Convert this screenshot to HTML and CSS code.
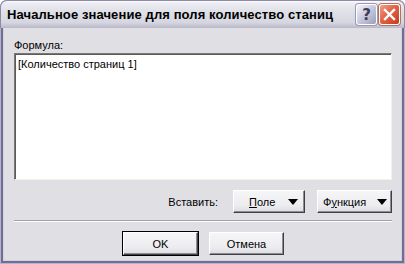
FILE: index.html
```html
<!DOCTYPE html>
<html lang="ru">
<head>
    <meta charset="UTF-8">
    <title>Начальное значение для поля количество станиц</title>
    <link rel="stylesheet" href="styles.css">
</head>
<body>
    <div class="window">
        <div class="titlebar">
            <span class="title">Начальное значение для поля количество станиц</span>
            <div class="caption-btns">
                <span class="cap-btn help">?</span>
                <span class="cap-btn close">
                    <svg width="13" height="13" viewBox="0 0 13 13">
                        <path d="M2 2 L11 11 M11 2 L2 11" stroke="#fff" stroke-width="2.4" stroke-linecap="square"/>
                    </svg>
                </span>
            </div>
        </div>

        <div class="client">
            <label class="field-label" for="formula">Формула:</label>
            <div class="formula" id="formula">[Количество страниц 1]</div>

            <div class="insert-row">
                <span class="insert-label">Вставить:</span>
                <button class="btn btn-drop field-btn"><span><u>П</u>оле</span><i class="arrow"></i></button>
                <button class="btn btn-drop func-btn"><span>Ф<u>у</u>нкция</span><i class="arrow"></i></button>
            </div>

            <div class="separator"></div>

            <div class="actions">
                <button class="btn default">OK</button>
                <button class="btn">Отмена</button>
            </div>
        </div>
    </div>
</body>
</html>
```

FILE: styles.css
```css
body {
    margin: 0;
    font-family: "Liberation Sans", Arial, sans-serif;
    font-size: 11px;
    color: #000;
    background: #fff;
}
.window {
    width: 405px;
    height: 264px;
    box-sizing: border-box;
    display: flex;
    flex-direction: column;
    background: #e0dfe3;
    border-radius: 7px 7px 0 0;
    overflow: hidden;
    box-shadow: inset 0 0 0 1px #b4b3c8, inset 0 0 0 3px #6f6e96, inset 0 0 0 4px #d2d1dc;
}
.titlebar {
    height: 28px;
    box-sizing: border-box;
    display: flex;
    align-items: center;
    padding: 0 4px 0 6px;
    border: 1px solid #8c8ba6;
    border-bottom: none;
    border-radius: 7px 7px 0 0;
    background: linear-gradient(#ffffff 0, #ececf2 2px, #e0e0e8 40%, #d6d6e0 80%, #b8b8ca 100%);
}
.title {
    font-weight: bold;
    font-size: 13px;
    letter-spacing: 0.1px;
    color: #000;
    white-space: nowrap;
}
.caption-btns {
    margin-left: auto;
    display: flex;
    gap: 2px;
}
.cap-btn {
    width: 21px;
    height: 21px;
    box-sizing: border-box;
    border: 1px solid #fff;
    border-radius: 3px;
    display: flex;
    align-items: center;
    justify-content: center;
}
.help {
    background: linear-gradient(135deg, #f4f4fa 0, #c8c8dc 50%, #9c9cb8 100%);
    box-shadow: 0 0 0 1px #9a99b4;
    color: #3c3c5c;
    font-weight: bold;
    font-size: 15px;
    font-family: "DejaVu Sans", sans-serif;
}
.close {
    background: linear-gradient(135deg, #f0a088 0, #e06448 45%, #c43a1e 100%);
    box-shadow: 0 0 0 1px #b8705c;
}
.client {
    flex: 1;
    display: flex;
    flex-direction: column;
    padding: 11px 13px 0 14px;
}
.field-label {
    line-height: 13px;
    margin-bottom: 1px;
}
.formula {
    height: 127px;
    box-sizing: border-box;
    padding: 3px 3px;
    background: #fff;
    border: 1px solid;
    border-color: #7a7872 #f4f2e8 #f4f2e8 #7a7872;
    box-shadow: inset 1px 1px #5c5b56;
    line-height: 14px;
}
.insert-row {
    margin-top: 10px;
    display: flex;
    align-items: center;
    justify-content: flex-end;
}
.insert-label {
    margin-right: 15px;
}
.btn {
    height: 23px;
    width: 75px;
    box-sizing: border-box;
    font-family: "Liberation Sans", Arial, sans-serif;
    font-size: 11px;
    color: #000;
    padding: 0;
    background: linear-gradient(#f6f6f8, #ececef 70%, #dcdce2);
    border: 1px solid;
    border-color: #ffffff #404040 #404040 #ffffff;
    box-shadow: inset -1px -1px #8c8c96;
}
.btn-drop {
    display: flex;
    align-items: center;
    justify-content: space-between;
}
.field-btn {
    width: 72px;
    padding: 0 6px 0 15px;
    margin-right: 12px;
}
.func-btn {
    padding: 0 4px 0 5px;
}
.arrow {
    width: 0;
    height: 0;
    border-left: 5px solid transparent;
    border-right: 5px solid transparent;
    border-top: 6px solid #000;
}
.separator {
    margin-top: 7px;
    height: 1px;
    background: #a0a0aa;
    border-bottom: 1px solid #fff;
}
.actions {
    margin-top: 10px;
    display: flex;
    justify-content: center;
    gap: 11px;
    padding-left: 1px;
}
.default {
    outline: 1px solid #000;
    outline-offset: 0;
    border-color: #ffffff #404040 #404040 #ffffff;
}
```
